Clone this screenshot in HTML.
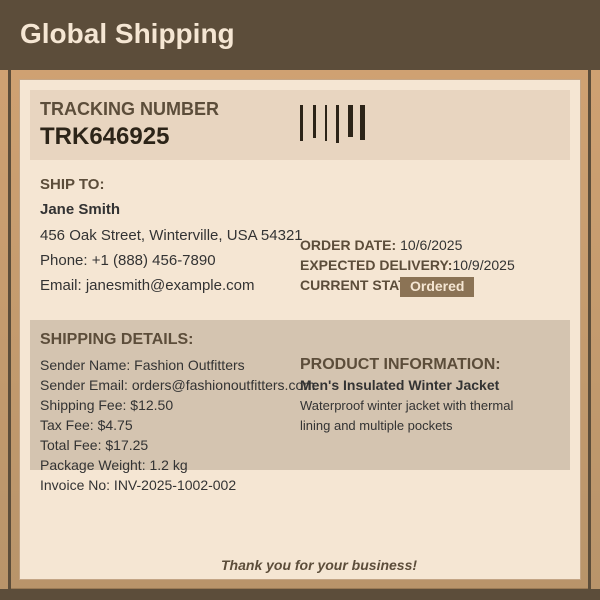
<!DOCTYPE html>
<html><head><meta charset="utf-8"><style>
*{margin:0;padding:0;box-sizing:border-box}
body{width:600px;height:600px;position:relative;overflow:hidden;font-family:"Liberation Sans",sans-serif;background:linear-gradient(#d2a373,#b8946a)}
div,span{position:absolute;white-space:nowrap}
.h{color:#5c4d3a;font-weight:bold}
.t{color:#333;font-size:14px}
.s{color:#333;font-size:15px}
.bar{background:#2c2418}
</style></head><body>
<div style="left:0;top:0;width:600px;height:70px;background:#5c4d3a"></div>
<div style="left:20px;top:18px;font-size:28px;font-weight:bold;color:#f5e6d3">Global Shipping</div>
<div style="left:8px;top:70px;width:3px;height:520px;background:#5c4d3a"></div>
<div style="left:588px;top:70px;width:3px;height:520px;background:#5c4d3a"></div>
<div style="left:11px;top:588px;width:577px;height:2px;background:#9a7a55"></div>
<div style="left:0;top:589px;width:600px;height:11px;background:#5c4d3a"></div>
<div style="left:19px;top:79px;width:562px;height:501px;background:#f5e6d3;border:1px solid #c4a585"></div>
<div style="left:30px;top:90px;width:540px;height:70px;background:#e8d5c0"></div>
<div class="h" style="left:40px;top:99px;font-size:18px">TRACKING NUMBER</div>
<div style="left:40px;top:123px;font-size:24px;font-weight:bold;color:#2c2418">TRK646925</div>
<div class="bar" style="left:300px;top:105px;width:3px;height:36px"></div>
<div class="bar" style="left:313px;top:105px;width:3px;height:33px"></div>
<div class="bar" style="left:325px;top:105px;width:2px;height:36px"></div>
<div class="bar" style="left:336px;top:105px;width:3px;height:38px"></div>
<div class="bar" style="left:348px;top:105px;width:5px;height:32px"></div>
<div class="bar" style="left:360px;top:105px;width:5px;height:35px"></div>
<div class="h" style="left:40px;top:176px;font-size:15px">SHIP TO:</div>
<div style="left:40px;top:201px;font-size:15px;font-weight:bold;color:#333">Jane Smith</div>
<div class="s" style="left:40px;top:227px">456 Oak Street, Winterville, USA 54321</div>
<div class="s" style="left:40px;top:252px">Phone: +1 (888) 456-7890</div>
<div class="s" style="left:40px;top:277px">Email: janesmith@example.com</div>
<div class="t" style="left:300px;top:237px"><b style="color:#5c4d3a">ORDER DATE:</b> 10/6/2025</div>
<div class="t" style="left:300px;top:257px"><b style="color:#5c4d3a">EXPECTED DELIVERY:</b>10/9/2025</div>
<div class="t" style="left:300px;top:277px"><b style="color:#5c4d3a">CURRENT STATUS:</b></div>
<div style="left:400px;top:277px;width:74px;height:20px;background:#8b7355;color:#f5e6d3;font-size:14px;font-weight:bold;padding:1px 0 0 10px">Ordered</div>
<div style="left:30px;top:320px;width:540px;height:150px;background:#d4c4b0"></div>
<div class="h" style="left:40px;top:331px;font-size:16px">SHIPPING DETAILS:</div>
<div class="t" style="left:40px;top:357px">Sender Name: Fashion Outfitters</div>
<div class="t" style="left:40px;top:377px">Sender Email: orders@fashionoutfitters.com</div>
<div class="t" style="left:40px;top:397px">Shipping Fee: $12.50</div>
<div class="t" style="left:40px;top:417px">Tax Fee: $4.75</div>
<div class="t" style="left:40px;top:437px">Total Fee: $17.25</div>
<div class="t" style="left:40px;top:457px">Package Weight: 1.2 kg</div>
<div class="t" style="left:40px;top:477px">Invoice No: INV-2025-1002-002</div>
<div class="h" style="left:300px;top:356px;font-size:16px">PRODUCT INFORMATION:</div>
<div class="t" style="left:300px;top:377px;font-weight:bold">Men's Insulated Winter Jacket</div>
<div class="t" style="left:300px;top:398px;font-size:13px">Waterproof winter jacket with thermal</div>
<div class="t" style="left:300px;top:418px;font-size:13px">lining and multiple pockets</div>
<div class="h" style="left:221px;top:557px;font-size:14px;font-style:italic">Thank you for your business!</div>
</body></html>
